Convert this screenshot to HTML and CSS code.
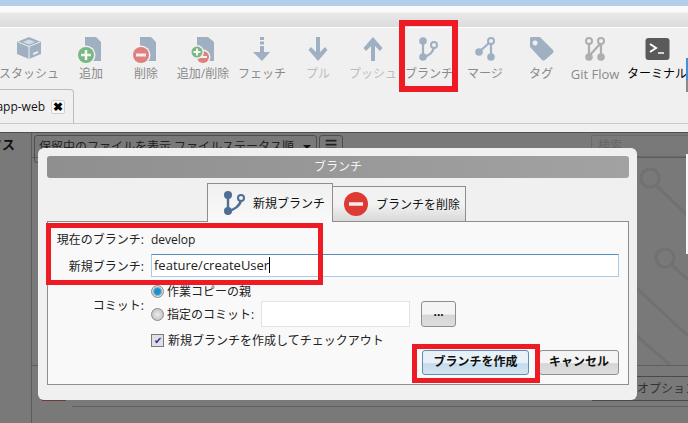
FILE: index.html
```html
<!DOCTYPE html>
<html lang="ja">
	<head>
		<meta charset="UTF-8" />
		<title>ブランチ</title>
		<link rel="stylesheet" href="styles.css">
	</head>
	<body>
		<div class="titlebar"></div>
		<div class="menubar"></div>

		<div class="toolbar">
			<div class="tool">
				<svg viewBox="0 0 28 28"><path class="fill" d="M14 2 26 7V19L14 24 2 19V7Z"/><path d="M3 7 14 11.500 25 7M14 11.500V24" fill="none" stroke="#f0f0f0" stroke-width="1"/><path d="M8 7 14 4.500 20 7 14 9.500Z" fill="#d5dce4"/><path d="M18 18 23 16V18L18 20Z" fill="#f0f0f0"/></svg>
				<span>スタッシュ</span>
			</div>
			<div class="tool">
				<svg viewBox="0 0 28 28"><path class="fill" d="M8 2H19L24 7V26H8Z"/><circle cx="9" cy="20" r="9.500" fill="#f0f0f0"/><circle cx="9" cy="20" r="8" fill="#79b883"/><path d="M9 15V25M4 20H14" stroke="#f4f8f4" stroke-width="2.500"/></svg>
				<span>追加</span>
			</div>
			<div class="tool">
				<svg viewBox="0 0 28 28"><path class="fill" d="M8 2H19L24 7V26H8Z"/><circle cx="9" cy="20" r="9.500" fill="#f0f0f0"/><circle cx="9" cy="20" r="8" fill="#e07f7c"/><path d="M4 20H14" stroke="#f8f0f0" stroke-width="3"/></svg>
				<span>削除</span>
			</div>
			<div class="tool">
				<svg viewBox="0 0 28 28"><path class="fill" d="M8 2H19L25 7V26H8Z"/><circle cx="14" cy="22" r="7.500" fill="#f0f0f0"/><circle cx="14" cy="22" r="6" fill="#e07f7c"/><path d="M10 22H18" stroke="#f8f0f0" stroke-width="2"/><circle cx="8" cy="17" r="7" fill="#f0f0f0"/><circle cx="8" cy="17" r="5.500" fill="#79b883"/><path d="M8 13.500V20.500M4.500 17H11.500" stroke="#f4f8f4" stroke-width="2"/></svg>
				<span>追加/削除</span>
			</div>
			<div class="tool">
				<svg viewBox="0 0 28 28"><path class="fill" d="M12 2H16V5H12ZM12 6.500H16V9.500H12ZM12 11H16V17H22L14 26 5 17H12Z"/></svg>
				<span>フェッチ</span>
			</div>
			<div class="tool">
				<svg viewBox="0 0 28 28"><path class="fill" d="M12 2H16V17L21 12 23.500 15 14 26 4.500 15 7 12 12 17Z"/></svg>
				<span class="off">プル</span>
			</div>
			<div class="tool">
				<svg viewBox="0 0 28 28"><path class="fill" d="M12 26H16V11L21 16 23.500 13 14 2 4.500 13 7 16 12 11Z"/></svg>
				<span class="off">プッシュ</span>
			</div>
			<div class="tool">
				<svg viewBox="0 0 28 28"><circle class="fill" cx="8" cy="6" r="3.800"/><circle class="fill" cx="8" cy="22" r="3.800"/><circle cx="19" cy="10" r="3" fill="none" stroke="#9fb0c3" stroke-width="2"/><path d="M8 6V22C13 21 18 18 19 12" fill="none" stroke="#9fb0c3" stroke-width="2.200"/></svg>
				<span>ブランチ</span>
			</div>
			<div class="tool">
				<svg viewBox="0 0 28 28"><circle class="fill" cx="8" cy="17" r="3.800"/><circle class="fill" cx="20" cy="22" r="3.800"/><circle cx="20" cy="6" r="3" fill="none" stroke="#9fb0c3" stroke-width="2"/><path d="M20 8V22M18 8 8 17" fill="none" stroke="#9fb0c3" stroke-width="2.200"/></svg>
				<span>マージ</span>
			</div>
			<div class="tool">
				<svg viewBox="0 0 28 28"><path class="fill" fill-rule="evenodd" d="M4 2H13L26 15Q27 17 26 18L18 25Q16 26 15 25L3 12V3ZM8 5.500A2.500 2.500 0 1 0 8.100 5.500Z"/></svg>
				<span>タグ</span>
			</div>
			<div class="tool">
				<svg viewBox="0 0 28 28"><g fill="none" stroke="#aeaeae"><circle cx="8" cy="6" r="3" stroke-width="2"/><circle cx="20" cy="6" r="3" stroke-width="2"/><path d="M8 9V22M20 9V22M19 9 9 20" stroke-width="2.200"/></g><circle cx="8" cy="22" r="3.800" fill="#aeaeae"/><circle cx="20" cy="22" r="3.800" fill="#aeaeae"/></svg>
				<span class="latin">Git Flow</span>
			</div>
			<div class="tool">
				<svg viewBox="0 0 28 28"><rect x="2.500" y="3" width="24" height="22" rx="3" fill="#5a5a5a"/><path d="M7 9 13 13 7 17" fill="none" stroke="#fff" stroke-width="2"/><path d="M15 18H21" stroke="#fff" stroke-width="1.500"/></svg>
				<span class="on">ターミナル</span>
			</div>
		</div>

		<div class="tabbar">
			<div class="repo-tab">
				<span>app-web</span>
				<b class="tab-close">✖</b>
			</div>
		</div>
		<div class="strip"></div>

		<div class="content">
			<div class="sidebar"><span>タス</span></div>
			<div class="main">
				<div class="filterbar">
					<div class="filter">保留中のファイルを表示 ファイルステータス順<i class="caret"></i></div>
					<div class="filter-btn">☰</div>
					<div class="search">検索</div>
				</div>
				<div class="list">
					<svg class="mark" viewBox="0 0 656 207"><g fill="none" stroke="#717171" stroke-width="3"><circle cx="618" cy="20" r="9"/><path d="M624 27 656 58"/><circle cx="633" cy="100" r="9"/><path d="M640 107 656 122M598 124 656 178M598 172 638 207"/></g></svg>
				</div>
				<div class="optionbar"><span>オプション</span></div>
				<div class="footbar"></div>
				<div class="footrest"></div>
			</div>
		</div>
		<div class="scrollbit"></div>
		<div class="scroll-thumb"></div>
		<div class="flagline"></div>

		<div class="dialog">
			<div class="dialog-title">ブランチ</div>
			<div class="tabs">
				<div class="tab active">
					<svg viewBox="0 0 28 28"><circle cx="7" cy="6" r="4" fill="#4d6f94"/><circle cx="7" cy="22" r="4" fill="#4d6f94"/><circle cx="20" cy="9" r="3" fill="none" stroke="#4d6f94" stroke-width="2"/><path d="M7 6V22C13 21 19 17 20 11" fill="none" stroke="#4d6f94" stroke-width="2.400"/></svg>
					新規ブランチ
				</div>
				<div class="tab">
					<svg viewBox="0 0 28 28"><circle cx="14" cy="14" r="12" fill="#dc3a32"/><path d="M7 14H21" stroke="#f6eeee" stroke-width="3.500"/></svg>
					ブランチを削除
				</div>
			</div>
			<div class="panel">
				<div class="row current">
					<label>現在のブランチ:</label>
					<span>develop</span>
				</div>
				<div class="row">
					<label>新規ブランチ:</label>
					<div class="input wide">feature/createUser<i class="cursor"></i></div>
				</div>
				<div class="row commit">
					<label>コミット:</label>
					<div class="options">
						<div class="opt first"><i class="radio checked"></i>作業コピーの親</div>
						<div class="opt second">
							<i class="radio"></i>指定のコミット:
							<div class="input sha"></div>
							<div class="btn dots">...</div>
						</div>
					</div>
				</div>
				<div class="row check">
					<label></label>
					<div class="opt"><i class="checkbox">✔</i>新規ブランチを作成してチェックアウト</div>
				</div>
				<div class="actions">
					<div class="btn primary">ブランチを作成</div>
					<div class="btn cancel">キャンセル</div>
				</div>
			</div>
		</div>

		<div class="redbox box-toolbar"></div>
		<div class="redbox box-fields"></div>
		<div class="redbox box-create"></div>
	</body>
</html>
```

FILE: styles.css
```css
html,
body {
	margin: 0;
	width: 688px;
	height: 423px;
	overflow: hidden;
}
body {
	position: relative;
	display: flex;
	flex-direction: column;
	font-family: "Open Sans", "Noto Sans CJK JP", sans-serif;
	font-size: 12px;
	background: #f0f0f0;
	color: #222;
}
.titlebar {
	height: 6px;
	background: #b4cde8;
}
.menubar {
	height: 21px;
	background: linear-gradient(#fafafa 0, #fafafa 6px, #e8e8e8 7px, #dcdcdc 100%);
	border-bottom: 1px solid #fff;
}

/* barra de herramientas */
.toolbar {
	height: 61px;
	margin-left: -2px;
	display: grid;
	grid-template-columns: 62px 62px 48px 66px 52px 60px 50px 62px 50px 62px 46px 78px;
	color: #8a8a8a;
}
.tool {
	display: flex;
	flex-direction: column;
	align-items: center;
	padding-top: 7px;
	white-space: nowrap;
}
.tool svg {
	width: 28px;
	height: 28px;
	flex: none;
}
.tool span {
	margin-top: 2px;
	line-height: 18px;
}
.tool .off {
	color: #bdbdbd;
}
.tool .on {
	color: #000;
}
.tool .latin {
	font-size: 13px;
}
.fill {
	fill: #9fb0c3;
}

.tabbar {
	height: 34px;
	border-bottom: 1px solid #c9c9c9;
}
.repo-tab {
	width: 74px;
	height: 34px;
	display: flex;
	align-items: center;
	justify-content: flex-end;
	gap: 6px;
	padding-right: 8px;
	box-sizing: border-box;
	background: #f0f0f0;
	border-right: 1px solid #bdbdbd;
	border-top: 1px solid #bdbdbd;
	border-radius: 0 4px 0 0;
	color: #111;
	font-size: 12px;
	white-space: nowrap;
}
.tab-close {
	width: 12px;
	height: 12px;
	flex: none;
	display: flex;
	align-items: center;
	justify-content: center;
	background: #f8f8f8;
	border: 1px solid #d0d0d0;
	border-radius: 2px;
	font-size: 12px;
	color: #000;
}
.strip {
	height: 8px;
}

/* fondo oscurecido */
.content {
	flex: 1;
	display: flex;
	background: #797979;
	border-top: 1px solid #4f4f4f;
	color: #222;
}
.sidebar {
	width: 32px;
	flex: none;
	box-sizing: border-box;
	padding: 1px 16px 0 0;
	border-right: 1px solid #5c5c5c;
	display: flex;
	justify-content: flex-end;
	align-items: flex-start;
	overflow: hidden;
	font-size: 13px;
	font-weight: 700;
	color: #111;
	white-space: nowrap;
}
.sidebar span {
	flex: none;
}
.main {
	flex: 1;
	display: flex;
	flex-direction: column;
}
.filterbar {
	height: 25px;
	flex: none;
	display: flex;
	gap: 2px;
	padding: 2px 0 0 2px;
	box-sizing: border-box;
	border-bottom: 1px solid #5c5c5c;
}
.filter {
	width: 283px;
	height: 28px;
	box-sizing: border-box;
	padding: 2px 0 0 4px;
	border: 1px solid #4e4e4e;
	border-radius: 3px;
	white-space: nowrap;
	line-height: 18px;
	position: relative;
}
.caret {
	position: absolute;
	right: 5px;
	top: 9px;
	border: 4px solid transparent;
	border-top-color: #111;
}
.filter-btn {
	width: 24px;
	height: 28px;
	box-sizing: border-box;
	border: 1px solid #4e4e4e;
	border-radius: 3px;
	text-align: center;
	line-height: 18px;
}
.search {
	width: 97px;
	height: 22px;
	margin-left: auto;
	box-sizing: border-box;
	padding-left: 6px;
	border: 1px solid #6a6a6a;
	border-right: none;
	color: #666;
	line-height: 20px;
}
.list {
	height: 207px;
	flex: none;
	border-bottom: 1px solid #5f5f5f;
}
.mark {
	display: block;
	width: 656px;
	height: 207px;
}
.optionbar {
	width: 96px;
	height: 25px;
	flex: none;
	box-sizing: border-box;
	margin: 10px 0 0 auto;
	border-top: 1px solid #4a4a4a;
	border-bottom: 1px solid #4a4a4a;
	display: flex;
	justify-content: flex-end;
	align-items: center;
	white-space: nowrap;
	overflow: hidden;
	line-height: 22px;
	color: #333;
}
.optionbar span {
	width: 51px;
	overflow: hidden;
	flex: none;
}
.footbar {
	height: 5px;
	flex: none;
}
.footrest {
	flex: 1;
	margin-left: 40px;
	border-top: 1px solid #5f5f5f;
}
.scrollbit {
	position: absolute;
	right: 0;
	top: 154px;
	width: 2px;
	height: 100px;
	background: #f8f8f8;
}
.scroll-thumb {
	position: absolute;
	right: 0;
	top: 58px;
	width: 2px;
	height: 22px;
	background: #3f8fdc;
	border-bottom: 12px solid #8a8a8a;
}
.flagline {
	position: absolute;
	left: 42px;
	top: 400px;
	width: 24px;
	height: 1px;
	background: #6e3a3a;
}

/* dialogo */
.dialog {
	position: absolute;
	left: 38px;
	top: 148px;
	width: 599px;
	height: 252px;
	box-sizing: border-box;
	padding: 8px 8px 0 9px;
	background: #f0f0f0;
	border-radius: 6px;
}
.dialog-title {
	height: 22px;
	background: linear-gradient(90deg, #8f8f8f, #a2a2a2);
	border-radius: 3px;
	color: #f4f4f4;
	text-align: center;
	line-height: 22px;
}
.tabs {
	display: flex;
	align-items: flex-end;
	height: 39px;
	margin: 5px 0 -1px 160px;
	position: relative;
	z-index: 1;
}
.tab {
	height: 36px;
	width: 133px;
	box-sizing: border-box;
	display: flex;
	align-items: center;
	gap: 6px;
	padding-left: 9px;
	border: 1px solid #8e8e8e;
	border-left: none;
	background: linear-gradient(#f2f2f2 50%, #d9d9d9);
	color: #111;
	white-space: nowrap;
}
.tab svg {
	width: 28px;
	height: 28px;
	flex: none;
}
.tab.active {
	width: 126px;
	height: 39px;
	gap: 4px;
	padding-left: 13px;
	border-left: 1px solid #8e8e8e;
	border-bottom: none;
	background: linear-gradient(#f0f0f0, #f9f9f9);
}
.panel {
	height: 164px;
	box-sizing: border-box;
	padding: 8px 9px 0 0;
	background: #f9f9f9;
	border: 1px solid #8e8e8e;
}
.row {
	display: grid;
	grid-template-columns: 96px 1fr;
	column-gap: 7px;
	align-items: center;
}
.row label {
	text-align: right;
	white-space: nowrap;
}
.current {
	height: 16px;
	margin-bottom: 8px;
}
.input {
	height: 23px;
	box-sizing: border-box;
	background: #fff;
	border: 1px solid #a9cde8;
	border-top-color: #5b8dbb;
	font-size: 13px;
	padding-left: 2px;
	line-height: 20px;
	color: #222;
}
.cursor {
	display: inline-block;
	width: 1px;
	height: 16px;
	background: #000;
	vertical-align: -3px;
}
.commit {
	margin-top: 6px;
}
.opt {
	display: flex;
	align-items: center;
	gap: 3px;
	white-space: nowrap;
}
.first {
	height: 16px;
}
.second {
	height: 26px;
	margin-top: 2px;
}
.radio {
	width: 11px;
	height: 11px;
	flex: none;
	border-radius: 50%;
	background: radial-gradient(#ececec, #b8b8b8);
	border: 1px solid #8a8a8a;
}
.radio.checked {
	background: radial-gradient(#1f8fc8 35%, #6fb0d4 50%, #dcdcdc 65%);
}
.sha {
	width: 149px;
	height: 26px;
	margin-left: 4px;
	border: 1px solid #dde4ec;
}
.btn {
	box-sizing: border-box;
	border: 1px solid #8e8e8e;
	border-radius: 3px;
	background: linear-gradient(#f4f4f4 50%, #d6d6d6 55%, #dedede);
	text-align: center;
	color: #111;
}
.dots {
	width: 35px;
	height: 26px;
	margin-left: 8px;
	font-weight: 700;
	line-height: 20px;
}
.check {
	margin-top: 4px;
	height: 17px;
}
.checkbox {
	width: 11px;
	height: 11px;
	margin-right: 1px;
	flex: none;
	display: flex;
	align-items: center;
	justify-content: center;
	border: 1px solid #7b7b7b;
	background: #dfdfe8;
	color: #2f2f80;
	font-size: 10px;
	font-style: normal;
}
.actions {
	display: flex;
	justify-content: flex-end;
	gap: 10px;
	margin-top: 2px;
}
.actions .btn {
	height: 25px;
	line-height: 22px;
	font-weight: 700;
}
.actions .primary {
	width: 107px;
	border-color: #5f8fb0;
	background: linear-gradient(#e8f1f8 50%, #c4dcec 55%, #d2e4f0);
}
.cancel {
	width: 80px;
}

/* marcas rojas */
.redbox {
	position: absolute;
	box-sizing: border-box;
	border: 5px solid #ed1c24;
	z-index: 5;
}
.box-toolbar {
	left: 399px;
	top: 20px;
	width: 59px;
	height: 72px;
	border-width: 6px;
}
.box-fields {
	left: 46px;
	top: 223px;
	width: 277px;
	height: 62px;
}
.box-create {
	left: 412px;
	top: 344px;
	width: 128px;
	height: 39px;
}
```
